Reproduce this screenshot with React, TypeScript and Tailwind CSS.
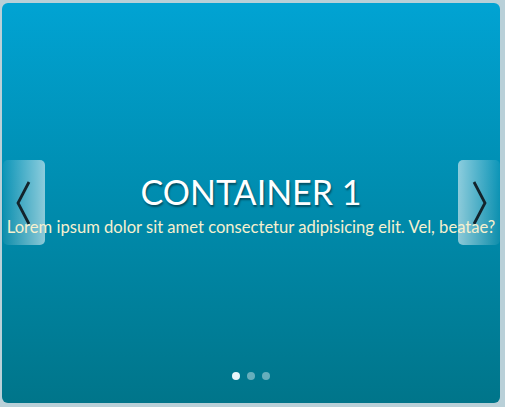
export default function App() {
  const dots = [true, false, false]

  return (
    <div className="min-h-screen bg-[#b9d0d8] pl-[2px] pt-[3px]">
      <div className="relative flex h-[400px] w-[498px] flex-col items-center justify-center overflow-hidden rounded-[6px] bg-gradient-to-b from-[#01a3d3] to-[#00758a] font-['Lato',sans-serif]">
        {/* Prev / next controls */}
        <button className="absolute left-[1px] top-[157px] flex h-[85px] w-[42px] items-center justify-center rounded-[5px] bg-gradient-to-r from-white/5 to-white/55">
          <svg width="16" height="46" viewBox="0 0 16 46" fill="none">
            <polyline points="13,2 2,23 13,44" stroke="#13242c" strokeWidth="2.8" />
          </svg>
        </button>
        <button className="absolute right-0 top-[157px] flex h-[85px] w-[42px] items-center justify-center rounded-[5px] bg-gradient-to-l from-white/5 to-white/55">
          <svg width="16" height="46" viewBox="0 0 16 46" fill="none">
            <polyline points="3,2 14,23 3,44" stroke="#13242c" strokeWidth="2.8" />
          </svg>
        </button>

        {/* Slide content */}
        <div className="relative z-10 flex flex-col items-center">
          <h1 className="text-[34px] leading-[44px] text-white [text-shadow:1px_2px_2px_rgba(0,0,0,0.45)]">
            CONTAINER 1
          </h1>
          <p className="mt-[3px] whitespace-nowrap text-[16.6px] leading-[20px] text-[#f6f0cf]">
            Lorem ipsum dolor sit amet consectetur adipisicing elit. Vel, beatae?
          </p>
        </div>

        {/* Pagination */}
        <div className="absolute bottom-[23px] left-0 right-0 flex justify-center gap-[7px]">
          {dots.map((active, i) => (
            <span
              key={i}
              className={active ? 'h-[8px] w-[8px] rounded-full bg-[#e8f6fa]' : 'h-[8px] w-[8px] rounded-full bg-white/40'}
            />
          ))}
        </div>
      </div>
    </div>
  )
}
